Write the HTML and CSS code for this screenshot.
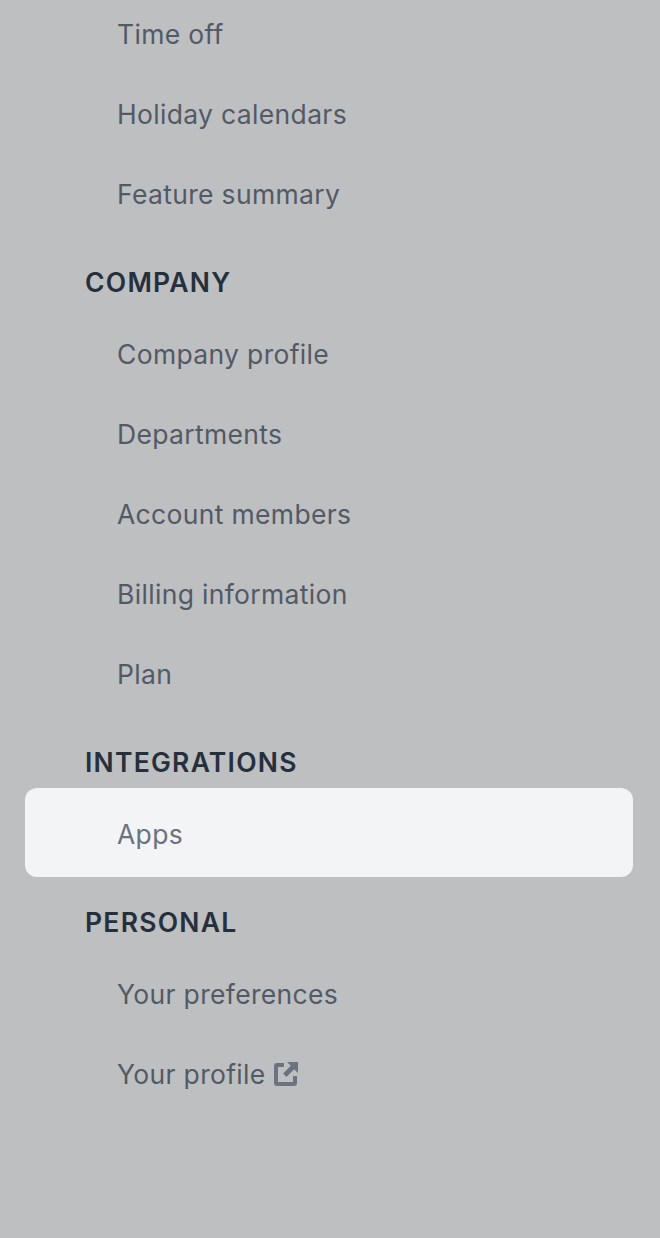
FILE: index.html
```html
<!DOCTYPE html>
<html lang="en">

<head>
  <meta charset="UTF-8">
  <meta name="viewport" content="width=device-width, initial-scale=1.0">
  <title>Settings</title>

  <link rel="stylesheet" href="styles.css">
</head>

<body>
  <nav id="menu">
    <a class="item">Time off</a>
    <a class="item">Holiday calendars</a>
    <a class="item">Feature summary</a>

    <h2 class="heading">COMPANY</h2>
    <a class="item">Company profile</a>
    <a class="item">Departments</a>
    <a class="item">Account members</a>
    <a class="item">Billing information</a>
    <a class="item">Plan</a>

    <h2 class="heading">INTEGRATIONS</h2>
    <a class="item active">Apps</a>

    <h2 class="heading">PERSONAL</h2>
    <a class="item">Your preferences</a>
    <a class="item">Your profile
      <svg class="external" viewBox="0 0 26 26" width="26" height="26">
        <path d="M11 2H4a3 3 0 0 0-3 3v17a3 3 0 0 0 3 3h17a3 3 0 0 0 3-3v-7h-4v6H5V6h6z" fill="currentColor" />
        <path d="M14 1h11v11l-3.800-3.800-7.700 7.700-3.400-3.400 7.700-7.700z" fill="currentColor" />
      </svg>
    </a>
  </nav>
</body>

</html>
```

FILE: styles.css
```css
html,
body {
  margin: 0;
  height: 1238px;
  overflow: hidden;
}

body {
  background: #bebfc1;
  font-family: Inter, "Liberation Sans", sans-serif;
}

#menu {
  display: flex;
  flex-direction: column;
  margin-top: -6px;
}

.item {
  display: flex;
  align-items: center;
  gap: 7px;
  height: 80px;
  box-sizing: border-box;
  font-size: 26.5px;
  letter-spacing: 0.33px;
  padding-left: 117px;
  color: #525a65;
}

.heading {
  height: 80px;
  margin: 0;
  padding: 16px 0 0 85px;
  box-sizing: border-box;
  display: flex;
  align-items: center;
  font-size: 26.5px;
  font-weight: 600;
  letter-spacing: 1.25px;
  color: #25303c;
}

.active {
  height: 89px;
  margin: -6px 27px -3px 25px;
  padding: 2px 0 0 92px;
  border-radius: 12px;
  background: #f3f4f6;
  color: #6b7280;
}

.external {
  color: #6b7280;
}
```
